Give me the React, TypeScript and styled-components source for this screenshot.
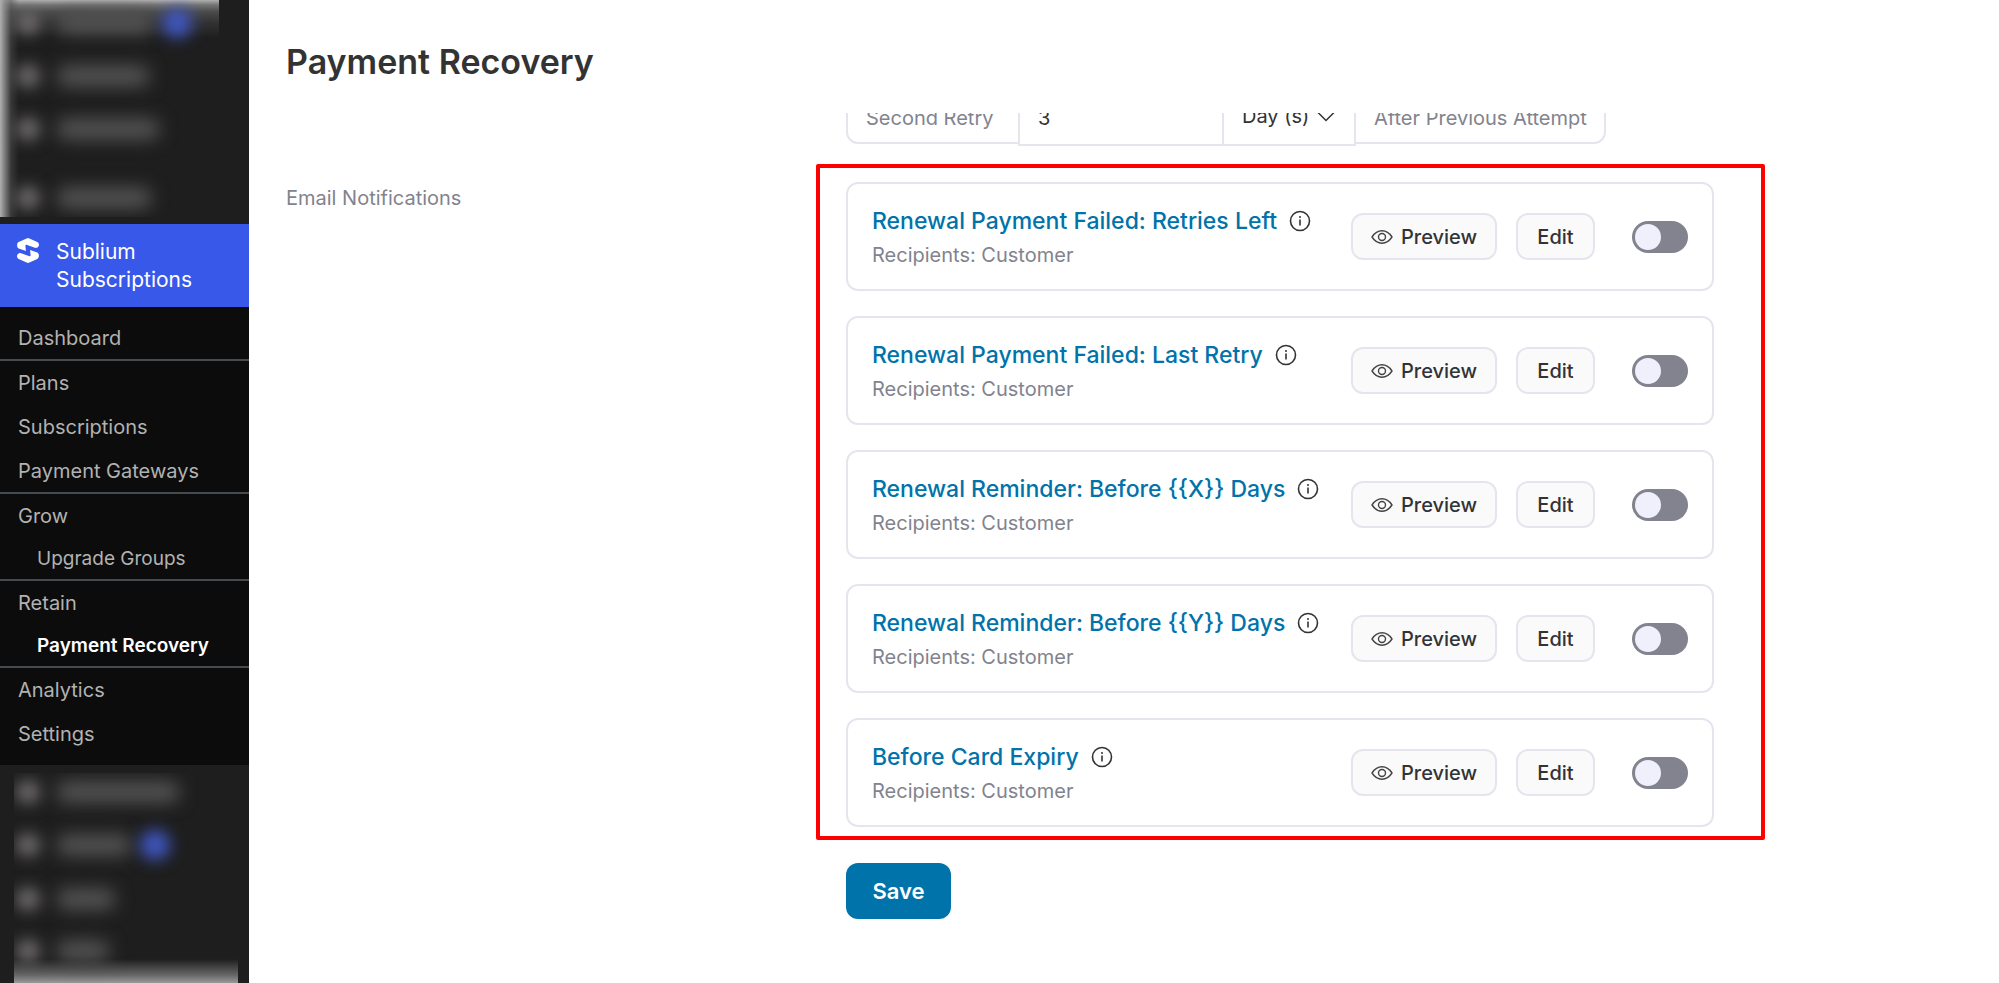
import React, { useState } from 'react';
import styled, { createGlobalStyle, css } from 'styled-components';

const GlobalStyle = createGlobalStyle`
  *, *::before, *::after { box-sizing: border-box; }
  body { margin: 0; background: #fff; }
  body, button, input, select {
    font-family: Inter, "Liberation Sans", sans-serif;
  }
`;

const Shell = styled.div`
  display: flex;
  height: 100vh;
  overflow: hidden;
`;

/* ---------- sidebar ---------- */

const Sidebar = styled.aside`
  display: flex;
  flex-direction: column;
  flex: 0 0 249px;
  background: #1e1e1e;
`;

const Hidden = styled.div<{ $place: 'top' | 'bottom' }>`
  overflow: hidden;
  display: flex;
  flex-direction: column;
  ${({ $place }) =>
    $place === 'top'
      ? css`
          flex: 0 0 217px;
          margin: 0 30px 7px 0;
          padding: 12px 0 0 16px;
          background:
            linear-gradient(to right, #b0b0b0, rgba(138, 138, 140, 0.85) 5px, rgba(80, 80, 80, 0.5) 11px, transparent 19px),
            linear-gradient(to bottom, #b0b0b0, #747474 5px, #4a4a4a 12px, #333 22px, transparent 38px);
        `
      : css`
          flex: 1 1 0;
          margin: 8px 11px 0 14px;
          padding: 8px 0 0 2px;
          background: linear-gradient(to top, #999, #666 8px, transparent 24px);
        `}
`;

const HiddenRow = styled.div<{ $gap: number }>`
  display: flex;
  align-items: center;
  flex: 0 0 22px;
  gap: 17px;
  margin-bottom: ${({ $gap }) => $gap}px;
`;

const HiddenIcon = styled.span`
  flex: none;
  width: 24px;
  height: 22px;
  border-radius: 11px;
  background: #757172;
  filter: blur(8px);
`;

const HiddenText = styled.span<{ $width: number }>`
  flex: none;
  width: ${({ $width }) => $width}px;
  height: 20px;
  border-radius: 8px;
  background: #565656;
  filter: blur(9px);
`;

const HiddenBadge = styled.span`
  flex: none;
  width: 30px;
  height: 30px;
  margin: -4px 0 -4px -8px;
  border-radius: 15px;
  background: #4058c4;
  filter: blur(8px);
`;

const Current = styled.a`
  display: flex;
  flex: none;
  gap: 17px;
  height: 83px;
  padding: 14px 17px 0;
  background: #3858e9;
  color: #fff;
  font-size: 21px;
  line-height: 28px;
  text-decoration: none;

  svg { flex: none; }
`;

const Submenu = styled.nav`
  flex: none;
  padding: 9px 0;
  background: #0c0c0c;
`;

const SubLink = styled.a<{ $nested?: boolean; $active?: boolean; $divider?: boolean }>`
  display: flex;
  align-items: center;
  height: ${({ $nested, $divider }) => ($nested ? 43 : $divider ? 45 : 44)}px;
  padding-left: ${({ $nested }) => ($nested ? 37 : 18)}px;
  border-bottom: ${({ $divider }) => ($divider ? '2px solid #464b50' : '0')};
  color: ${({ $active }) => ($active ? '#fff' : '#b2b2b2')};
  font-size: ${({ $nested }) => ($nested ? 19 : 20)}px;
  font-weight: ${({ $active }) => ($active ? 600 : 400)};
  text-decoration: none;
`;

/* ---------- page ---------- */

const Main = styled.main`
  display: flex;
  flex-direction: column;
  flex: 1;
  min-width: 0;
`;

const Header = styled.header`
  display: flex;
  align-items: center;
  flex: 0 0 113px;
  padding: 11px 37px 0;
`;

const Title = styled.h1`
  margin: 0;
  color: #333;
  font-size: 34px;
  font-weight: 600;
  line-height: 48px;
`;

const Viewport = styled.div`
  flex: 1;
  min-height: 0;
  overflow: hidden;
`;

const Form = styled.form`
  display: grid;
  grid-template-columns: 560px minmax(0, 868px);
  margin: -24px 37px 0;
`;

const SectionLabel = styled.h2`
  margin: 0;
  padding-top: 3px;
  color: #82838e;
  font-size: 20px;
  font-weight: 400;
  line-height: 26px;
`;

const RetryRow = styled.div`
  grid-column: 2;
  display: flex;
  width: 760px;
  height: 55px;
  margin-bottom: 38px;
  border: 2px solid #e5e5ef;
  border-radius: 12px;
  color: #82838e;
  font-size: 20px;
`;

const RetryCell = styled.label<{ $width: number }>`
  flex: 0 0 ${({ $width }) => $width}px;
  padding-left: 18px;
  line-height: 54px;
  white-space: nowrap;
`;

const RetryInput = styled.input`
  flex: 0 0 206px;
  min-width: 0;
  height: 59px;
  margin-top: -4px;
  padding: 2px 18px 0;
  border: 2px solid #e5e5ef;
  background: #fff;
  color: #333;
  font-size: 20px;
`;

const SelectBox = styled.span`
  display: grid;
  flex: 0 0 134px;
  height: 59px;
  margin: -4px 0 0 -2px;
  align-items: center;

  & > * { grid-area: 1 / 1; }
  svg { justify-self: end; margin-right: 21px; pointer-events: none; }
`;

const RetrySelect = styled.select`
  width: 100%;
  height: 59px;
  padding: 0 18px 2px;
  border: 2px solid #e5e5ef;
  border-radius: 0;
  appearance: none;
  background: #fff;
  color: #333;
  font-size: 20px;
`;

const CardList = styled.div`
  position: relative;
  display: flex;
  flex-direction: column;
  gap: 25px;
`;

const Highlight = styled.div`
  position: absolute;
  inset: -18px -51px -13px -30px;
  border: 4px solid #f00;
  border-radius: 2px;
  pointer-events: none;
`;

const Card = styled.article`
  display: flex;
  align-items: center;
  height: 109px;
  padding: 0 24px;
  border: 2px solid #e5e5ef;
  border-radius: 12px;
`;

const CardText = styled.div`
  flex: 1;
  min-width: 0;
  padding-top: 2px;
`;

const CardHeading = styled.div`
  display: flex;
  align-items: center;
  gap: 12px;
  height: 34px;

  svg { flex: none; }
`;

const CardLink = styled.a`
  color: #0073aa;
  font-size: 23px;
  font-weight: 500;
  text-decoration: none;
  white-space: nowrap;
`;

const Recipients = styled.p`
  margin: 0;
  color: #82838e;
  font-size: 20px;
  line-height: 34px;
`;

const OutlineButton = styled.button<{ $width: number }>`
  display: flex;
  align-items: center;
  justify-content: center;
  flex: none;
  gap: 8px;
  width: ${({ $width }) => $width}px;
  height: 47px;
  margin-right: 19px;
  padding: 0;
  border: 2px solid #e5e5ef;
  border-radius: 12px;
  background: #fafafa;
  color: #333;
  font-size: 20px;
  font-weight: 500;
`;

const Toggle = styled.input`
  flex: none;
  width: 56px;
  height: 32px;
  margin: 0 0 0 18px;
  padding: 3px;
  appearance: none;
  border-radius: 16px;
  background: #82838e;

  &::before {
    content: '';
    display: block;
    width: 26px;
    height: 26px;
    border-radius: 13px;
    background: #f0f0fc;
  }
  &:checked { background: #0073aa; }
  &:checked::before { margin-left: 24px; }
`;

const SaveButton = styled.button`
  grid-column: 2;
  justify-self: start;
  width: 105px;
  height: 56px;
  margin-top: 36px;
  border: 0;
  border-radius: 12px;
  background: #0073aa;
  color: #fff;
  font-size: 22px;
  font-weight: 600;
`;

/* ---------- icons ---------- */

const LogoIcon = () => (
  <svg width="22" height="25" viewBox="0 0 22 25" fill="#fff" aria-hidden="true">
    <path d="M9.600.400a3 3 0 0 1 2.800 0l7.900 3.700c1.600.900 2.100 2.700 1.300 4.100-.700 1.400-2.300 1.900-3.700 1.600l-8.400-3.100c-.700-.200-1.200.200-1.100.900l.500 5.400-7.200-2.600C-.300 9.300-.600 5.400 1.700 4.100z" />
    <path d="M12.400 24.600a3 3 0 0 1-2.800 0l-7.900-3.700C.100 20-.4 18.200.4 16.800c.7-1.400 2.300-1.900 3.700-1.600l8.400 3.100c.7.200 1.200-.2 1.100-.9l-.5-5.400 7.200 2.600c2 1.100 2.300 5 0 6.300z" />
  </svg>
);

const InfoIcon = () => (
  <svg width="22" height="22" viewBox="0 0 22 22" fill="none" aria-hidden="true">
    <circle cx="11" cy="11" r="9.500" stroke="#333" strokeWidth="1.600" />
    <path d="M11 9.500v6" stroke="#333" strokeWidth="1.600" />
    <circle cx="11" cy="6.900" r="1" fill="#333" />
  </svg>
);

const EyeIcon = () => (
  <svg width="22" height="14" viewBox="0 0 22 14" fill="none" stroke="#444" strokeWidth="1.400" aria-hidden="true">
    <path d="M1 7c2.600-4 6.100-6.200 10-6.200S18.400 3 21 7c-2.600 4-6.100 6.200-10 6.200S3.600 11 1 7z" strokeLinejoin="round" />
    <circle cx="11" cy="7" r="3.500" />
  </svg>
);

const ChevronIcon = () => (
  <svg width="18" height="11" viewBox="0 0 18 11" fill="none" stroke="#333" strokeWidth="1.500" aria-hidden="true">
    <path d="M1 1.500l8 8 8-8" />
  </svg>
);

/* ---------- data ---------- */

const menu = [
  { text: 'Dashboard', divider: true },
  { text: 'Plans' },
  { text: 'Subscriptions' },
  { text: 'Payment Gateways', divider: true },
  { text: 'Grow' },
  { text: 'Upgrade Groups', nested: true, divider: true },
  { text: 'Retain' },
  { text: 'Payment Recovery', nested: true, divider: true, active: true },
  { text: 'Analytics' },
  { text: 'Settings' },
];

const emails = [
  'Renewal Payment Failed: Retries Left',
  'Renewal Payment Failed: Last Retry',
  'Renewal Reminder: Before {{X}} Days',
  'Renewal Reminder: Before {{Y}} Days',
  'Before Card Expiry',
];

const hiddenTop = [
  { width: 96, gap: 31, badge: true },
  { width: 92, gap: 31 },
  { width: 102, gap: 47 },
  { width: 94, gap: 0 },
];

const hiddenBottom = [
  { width: 122, gap: 31 },
  { width: 74, gap: 32, badge: true },
  { width: 58, gap: 30 },
  { width: 52, gap: 0 },
];

const HiddenItems = ({ items }: { items: { width: number; gap: number; badge?: boolean }[] }) => (
  <>
    {items.map((item, i) => (
      <HiddenRow key={i} $gap={item.gap}>
        <HiddenIcon />
        <HiddenText $width={item.width} />
        {item.badge && <HiddenBadge />}
      </HiddenRow>
    ))}
  </>
);

const EmailCard = ({ name }: { name: string }) => {
  const [on, setOn] = useState(false);
  return (
    <Card>
      <CardText>
        <CardHeading>
          <CardLink href="#">{name}</CardLink>
          <InfoIcon />
        </CardHeading>
        <Recipients>Recipients: Customer</Recipients>
      </CardText>
      <OutlineButton type="button" $width={146}>
        <EyeIcon />
        Preview
      </OutlineButton>
      <OutlineButton type="button" $width={79}>Edit</OutlineButton>
      <Toggle type="checkbox" role="switch" aria-label={name} checked={on} onChange={() => setOn(!on)} />
    </Card>
  );
};

export default function App() {
  return (
    <>
      <GlobalStyle />
      <Shell>
        <Sidebar>
          <Hidden $place="top">
            <HiddenItems items={hiddenTop} />
          </Hidden>
          <Current href="#">
            <LogoIcon />
            <span>Sublium Subscriptions</span>
          </Current>
          <Submenu>
            {menu.map((item) => (
              <SubLink key={item.text} href="#" $nested={item.nested} $active={item.active} $divider={item.divider}>
                {item.text}
              </SubLink>
            ))}
          </Submenu>
          <Hidden $place="bottom">
            <HiddenItems items={hiddenBottom} />
          </Hidden>
        </Sidebar>
        <Main>
          <Header>
            <Title>Payment Recovery</Title>
          </Header>
          <Viewport>
            <Form onSubmit={(e) => e.preventDefault()}>
              <RetryRow>
                <RetryCell htmlFor="retry-count" $width={170}>Second Retry</RetryCell>
                <RetryInput id="retry-count" defaultValue="3" />
                <SelectBox>
                  <RetrySelect aria-label="Retry unit">
                    <option>Day (s)</option>
                  </RetrySelect>
                  <ChevronIcon />
                </SelectBox>
                <RetryCell as="span" $width={248}>After Previous Attempt</RetryCell>
              </RetryRow>
              <SectionLabel>Email Notifications</SectionLabel>
              <CardList>
                {emails.map((name) => (
                  <EmailCard key={name} name={name} />
                ))}
                <Highlight />
              </CardList>
              <SaveButton type="submit">Save</SaveButton>
            </Form>
          </Viewport>
        </Main>
      </Shell>
    </>
  );
}
